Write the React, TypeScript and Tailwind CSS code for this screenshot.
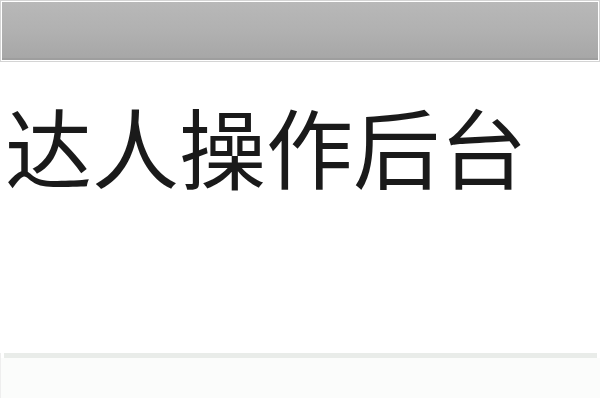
export default function App() {
  return (
    <div className="w-[600px] h-[398px] bg-white overflow-hidden flex flex-col">
      <div className="h-[62px] shrink-0 border border-[#d4d4d4] p-px">
        <div className="h-full bg-gradient-to-b from-[#b8b8b8] via-[#b1b1b1] to-[#a7a7a7] border-b-2 border-[#9e9e9e]" />
      </div>
      <div className="flex-1 flex items-start pt-[33px] overflow-hidden">
        <div
          className="whitespace-nowrap text-[87px] leading-[100px] text-[#1a1a1a] ml-[-82px]"
          style={{ fontFamily: '"Noto Sans CJK SC", sans-serif' }}
        >
          淘达人操作后台
        </div>
      </div>
      <div className="h-[45px] shrink-0 flex flex-col border-l border-[#eeeeee]">
        <div className="h-[5px] mx-[3px] bg-[#e9ece9]" />
        <div className="flex-1 bg-[#fbfcfb]" />
      </div>
    </div>
  );
}
